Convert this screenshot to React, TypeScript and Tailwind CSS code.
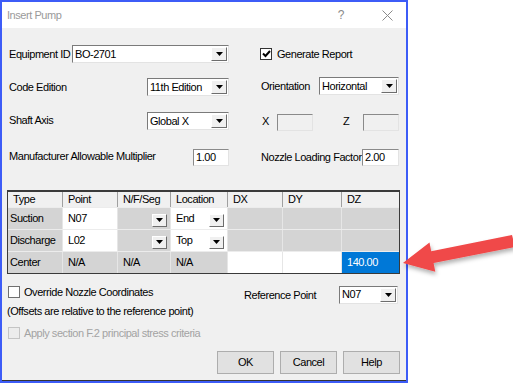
import React from 'react';

const DropBtn: React.FC<{ className?: string }> = ({ className = '' }) => <div className={`flex items-center justify-center bg-[#f0f0f0] border border-t-white border-l-white border-r-[#6d6d6d] border-b-[#6d6d6d] ${className}`}>
    <svg width="7" height="4" viewBox="0 0 7 4"><path d="M0 0h7L3.5 4z" fill="#000" /></svg>
  </div>;

const Combo: React.FC<{ value: string; className: string }> = ({ value, className }) => <div className={`flex h-[18px] items-center bg-white border border-[#7a7a7a] border-b-[#e3e3e3] border-r-[#e3e3e3] pl-[2px] ${className}`}>
    <span className="flex-1 leading-none">{value}</span>
    <DropBtn className="h-[14px] w-[16px] mr-px" />
  </div>;

const Field: React.FC<{ value?: string; className: string; disabled?: boolean }> = ({ value = '', className, disabled }) => <div className={`flex h-[17px] items-center border border-[#8a8a8a] border-b-[#e3e3e3] border-r-[#e3e3e3] pl-[2px] ${disabled ? 'bg-[#f0f0f0]' : 'bg-white'} ${className}`}>
    {value}
  </div>;

const CheckBox: React.FC<{ checked?: boolean; disabled?: boolean }> = ({ checked, disabled }) => <div className={`flex h-[12px] w-[12px] items-center justify-center border ${disabled ? 'border-[#c4c4c4] bg-[#ececec]' : checked ? 'border-[#333] bg-white' : 'border-[#707070] bg-white'}`}>
    {checked && <svg width="9" height="8" viewBox="0 0 9 8"><path d="M1 3.5 3.5 6 8 1" stroke="#000" strokeWidth="2" fill="none" /></svg>}
  </div>;

type Cell = { kind: 'g' | 'w' | 'gd' | 'wd' | 'sel'; text?: string };

const widths = ['w-[55px]', 'w-[55px]', 'w-[53px]', 'w-[57px]', 'w-[55px]', 'w-[59px]', 'w-[57px]'];
const headers = ['Type', 'Point', 'N/F/Seg', 'Location', 'DX', 'DY', 'DZ'];

const rows: Cell[][] = [[{ kind: 'g', text: 'Suction' }, { kind: 'w', text: 'N07' }, { kind: 'gd' }, { kind: 'wd', text: 'End' }, { kind: 'g' }, { kind: 'g' }, { kind: 'g' }], [{ kind: 'g', text: 'Discharge' }, { kind: 'w', text: 'L02' }, { kind: 'gd' }, { kind: 'wd', text: 'Top' }, { kind: 'g' }, { kind: 'g' }, { kind: 'g' }], [{ kind: 'g', text: 'Center' }, { kind: 'g', text: 'N/A' }, { kind: 'g', text: 'N/A' }, { kind: 'g', text: 'N/A' }, { kind: 'w' }, { kind: 'w' }, { kind: 'sel', text: '140.00' }]];

const cellBg = {
  g: 'bg-[#d4d4d4]',
  gd: 'bg-[#d4d4d4]',
  w: 'bg-white',
  wd: 'bg-white',
  sel: 'bg-[#0078d7] text-white'
};

export default function App() {
  return <div className="relative h-[383px] w-[513px] overflow-hidden bg-white text-[11px] tracking-[-0.45px] text-black" style={{ fontFamily: '"Liberation Sans", Arial, sans-serif' }}>
      <div className="flex h-[383px] w-[408px] flex-col border-2 border-[#3d5cf7] bg-[#f0f0f0]">
        {/* Title bar */}
        <div className="flex h-[26px] items-center bg-white">
          <span className="pl-[5px] text-[#9a9a9a]">Insert Pump</span>
          <span className="ml-auto mr-[38px] text-[12px] text-[#8a8a8a]">?</span>
          <svg className="mr-[13px]" width="11" height="11" viewBox="0 0 11 11"><path d="M0.5 0.5 10.5 10.5M10.5 0.5 0.5 10.5" stroke="#8a8a8a" strokeWidth="1" /></svg>
        </div>

        <div className="flex flex-1 flex-col pl-[5px] pr-[6px]">
          {/* Row 1 */}
          <div className="mt-[17px] flex h-[18px] items-center">
            <span className="w-[65px] pl-[2px]">Equipment ID</span>
            <Combo value="BO-2701" className="w-[157px]" />
            <div className="ml-[31px]"><CheckBox checked /></div>
            <span className="ml-[5px]">Generate Report</span>
          </div>

          {/* Row 2 */}
          <div className="mt-[14px] flex h-[19px] items-center">
            <span className="w-[140px] pl-[2px] pt-[2px]">Code Edition</span>
            <Combo value="11th Edition" className="w-[82px] self-end" />
            <span className="ml-[31px] w-[59px] pl-px">Orientation</span>
            <Combo value="Horizontal" className="w-[80px] self-start" />
          </div>

          {/* Row 3 */}
          <div className="mt-[16px] flex h-[19px] items-center">
            <span className="w-[140px] pl-[2px] pb-[3px]">Shaft Axis</span>
            <Combo value="Global X" className="w-[82px] self-start" />
            <span className="ml-[31px] w-[17px] pl-[2px]">X</span>
            <Field disabled className="w-[36px] self-end" />
            <span className="ml-[30px] w-[20px]">Z</span>
            <Field disabled className="w-[36px] self-end" />
          </div>

          {/* Row 4 */}
          <div className="mt-[18px] flex h-[17px] items-center">
            <span className="w-[186px] pb-[2px] pl-[2px]">Manufacturer Allowable Multiplier</span>
            <Field value="1.00" className="w-[36px]" />
            <span className="ml-[32px] w-[101px]">Nozzle Loading Factor</span>
            <Field value="2.00" className="w-[37px]" />
          </div>

          {/* Table */}
          <div className="mt-[24px] w-[393px] border border-t-2 border-[#3a3a3a]">
            <div className="flex h-[15px] bg-[#f0f0f0]">
              {headers.map((h, i) => <div key={h} className={`${widths[i]} flex items-center pl-[5px] ${i < 6 ? 'border-r border-[#a0a0a0]' : ''}`}>
                  {h}
                </div>)}
            </div>
            {rows.map((row, r) => <div key={r} className="flex h-[22px] border-t border-[#ececec]">
                {row.map((c, i) => <div key={i} className={`${widths[i]} ${cellBg[c.kind]} flex items-center ${i < 6 ? 'border-r border-[#e6e6e6]' : ''} ${i === 0 ? 'pl-[2px]' : 'pl-[5px]'} ${c.kind === 'sel' ? 'pl-[3px]' : ''}`}>
                    <span className="flex-1">{c.text}</span>
                    {(c.kind === 'gd' || c.kind === 'wd') && <DropBtn className="mr-[3px] mt-[3px] h-[13px] w-[15px]" />}
                  </div>)}
              </div>)}
          </div>

          {/* Override + reference point */}
          <div className="mt-[11px] flex">
            <div className="flex w-[237px] flex-col">
              <div className="flex h-[14px] items-center">
                <div className="ml-px"><CheckBox /></div>
                <span className="ml-[4px]">Override Nozzle Coordinates</span>
              </div>
              <div className="mt-[4px] h-[14px]">(Offsets are relative to the reference point)</div>
            </div>
            <div className="flex h-[19px] items-center">
              <span className="w-[95px] pt-[2px]">Reference Point</span>
              <Combo value="N07" className="w-[59px]" />
            </div>
          </div>

          <div className="mt-[9px] flex h-[14px] items-center">
            <div className="ml-px"><CheckBox disabled /></div>
            <span className="ml-[4px] text-[#a3a3a3]">Apply section F.2 principal stress criteria</span>
          </div>

          <div className="mt-[11px] flex justify-end gap-[6px]">
            {['OK', 'Cancel', 'Help'].map(b => <div key={b} className="flex h-[23px] w-[57px] items-center justify-center border border-[#adadad] bg-[#e1e1e1]">
                {b}
              </div>)}
          </div>
        </div>
        <div className="h-px bg-[#333]" />
      </div>

      {/* Callout arrow */}
      <svg className="pointer-events-none absolute left-0 top-0" width="513" height="383" viewBox="0 0 513 383">
        <defs>
          <filter id="sh" x="-20%" y="-40%" width="140%" height="180%">
            <feDropShadow dx="1" dy="3" stdDeviation="2" floodColor="#000" floodOpacity="0.3" />
          </filter>
        </defs>
        <polygon points="403,263 429.5,242.4 431.2,251.2 512,235 515,247 433.6,263 435.3,271.8" fill="#f04848" filter="url(#sh)" />
      </svg>
    </div>;
}
